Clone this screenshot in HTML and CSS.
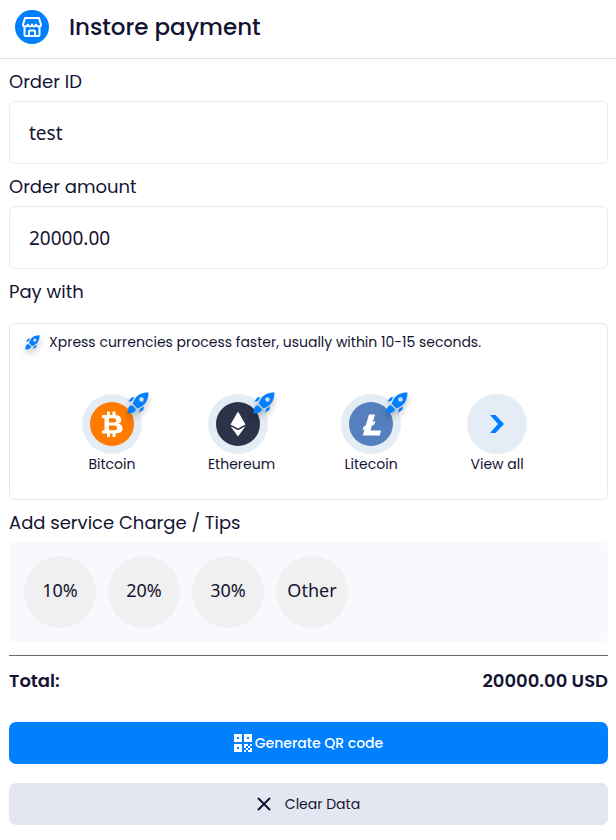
FILE: index.html
```html
<!DOCTYPE html>
<html lang="en">
<head>
<meta charset="utf-8">
<meta name="viewport" content="width=device-width, initial-scale=1">
<title>Instore payment</title>
<link rel="stylesheet" href="styles.css">
</head>
<body>
<svg class="defs" aria-hidden="true">
  <symbol id="rocket" viewBox="0 0 22 22">
    <path fill-rule="evenodd" d="M21.5.5C16 .6 11.500 2 8.600 5.800 7.200 7.800 6.200 10 5.800 11.700L10.300 16.200C12.500 15.700 14.600 14.700 16.300 13.200 20 10 21.300 6 21.500.5ZM14.500 5.200a2.300 2.300 0 1 1 0 4.600 2.300 2.300 0 0 1 0-4.600Z"/>
    <path d="M7.400 5.100 4.500 5.400 1.300 9.600 5 9.300ZM16.900 14.600 16.600 17.500 12.400 20.700 12.700 17ZM5 13.200C2 13.300.8 16 .5 21.500 6 21.200 8.700 20 8.800 17Z"/>
  </symbol>
</svg>
<header class="header">
  <svg class="logo" viewBox="0 0 34 34" aria-hidden="true">
    <circle cx="17" cy="17" r="17" fill="#007fff"/>
    <g fill="none" stroke="#fff" stroke-width="2" stroke-linejoin="round" stroke-linecap="round">
      <path d="M10 8H24L26 14.500Q26 16.500 23.500 16.500 21.500 16.500 21 14.500 20 16.500 19 16.500 17.500 16.500 17 14.500 16.500 16.500 15 16.500 13.500 16.500 13 14.500 12 16.500 10.500 16.500 8 16.500 8 14.500Z"/>
      <path d="M9.500 17V24.500Q9.500 26 11 26H23Q24.500 26 24.500 24.500V17M14 26V21.500Q14 20.500 15 20.500H19Q20 20.500 20 21.500V26"/>
    </g>
  </svg>
  <h1 class="title">Instore payment</h1>
</header>
<main class="page">
  <label class="label" for="order-id">Order ID</label>
  <input class="field" id="order-id" type="text" value="test">
  <label class="label" for="order-amount">Order amount</label>
  <input class="field" id="order-amount" type="text" value="20000.00">

  <h2 class="label label-pay">Pay with</h2>
  <section class="panel">
    <p class="notice"><svg class="rocket-small" aria-hidden="true"><use href="#rocket"/></svg>Xpress currencies process faster, usually within 10-15 seconds.</p>
    <div class="coins">
      <button class="coin" type="button">
        <span class="disc">
          <svg class="mark" viewBox="0 0 44 44" aria-hidden="true"><circle cx="22" cy="22" r="22" fill="#ff7b00"/><path fill="#fff" fill-rule="evenodd" d="M12 13H17V9.500H20V13H22.500V9.500H25.500V13.100C29.500 13.500 31.300 15.200 31.300 17.800 31.300 20 30 21.300 28.200 21.800 31 22.300 32.500 24 32.500 26.500 32.500 29.800 30.200 31.300 25.500 31.500V35H22.500V31.500H20V35H17V31.500H12V28.500H14.500V16H12ZM19 16.200V20.600H22.500C25 20.600 26.300 20 26.300 18.400 26.300 16.800 25 16.200 22.500 16.200ZM19 23.600V28.300H23C25.800 28.300 27.200 27.700 27.200 26 27.200 24.200 25.800 23.600 23 23.600Z"/></svg>
          <svg class="rocket" aria-hidden="true"><use href="#rocket"/></svg>
        </span>
        <span>Bitcoin</span>
      </button>
      <button class="coin" type="button">
        <span class="disc">
          <svg class="mark" viewBox="0 0 44 44" aria-hidden="true"><circle cx="22" cy="22" r="22" fill="#2c3247"/><path fill="#fff" d="M22 9.500 29.500 22.500 22 26.500 14.500 22.500ZM14.500 24.300 22 28.300 29.500 24.300 22 34.500Z"/></svg>
          <svg class="rocket" aria-hidden="true"><use href="#rocket"/></svg>
        </span>
        <span>Ethereum</span>
      </button>
      <button class="coin" type="button">
        <span class="disc">
          <svg class="mark" viewBox="0 0 44 44" aria-hidden="true"><circle cx="22" cy="22" r="22" fill="#567fbe"/><path fill="#fff" d="M20 12.500H26L23.800 20.300 26.500 18.800 25.500 22.300 22.700 23.900 21.500 28.500H32L30.800 33.500H13.800L15.600 27.200 13.500 28.300 14.500 24.700 16.700 23.500Z"/></svg>
          <svg class="rocket" aria-hidden="true"><use href="#rocket"/></svg>
        </span>
        <span>Litecoin</span>
      </button>
      <button class="coin" type="button">
        <span class="disc">
          <svg class="chevron" viewBox="0 0 14 18" aria-hidden="true"><path fill="#007fff" d="M0 0H5.500L14 9 5.500 18H0L8 9Z"/></svg>
        </span>
        <span>View all</span>
      </button>
    </div>
  </section>

  <h2 class="label">Add service Charge / Tips</h2>
  <div class="tips">
    <button class="tip" type="button">10%</button>
    <button class="tip" type="button">20%</button>
    <button class="tip" type="button">30%</button>
    <button class="tip" type="button">Other</button>
  </div>

  <div class="total"><span>Total:</span><span>20000.00 USD</span></div>

  <button class="action primary" type="button">
    <svg class="qr" viewBox="0 0 18 18" aria-hidden="true"><path fill="#fff" fill-rule="evenodd" d="M0 0H8V8H0ZM3 3V5H5V3ZM10 0H18V8H10ZM13 3V5H15V3ZM0 10H8V18H0ZM3 13V15H5V13ZM10 10H14V12H12V14H10ZM16 10H18V12H16ZM14 12H16V14H14ZM12 14H14V16H12ZM10 16H12V18H10ZM16 14H18V18H14V16H16Z"/></svg>
    <span>Generate QR code</span>
  </button>
  <button class="action secondary" type="button">
    <svg class="cross" viewBox="0 0 14 14" aria-hidden="true"><path d="M1.500 1.500 12.500 12.500M12.500 1.500 1.500 12.500" stroke="#141432" stroke-width="2" stroke-linecap="round"/></svg>
    <span>Clear Data</span>
  </button>
</main>
</body>
</html>
```
FILE: styles.css
```css
* {
  box-sizing: border-box;
}

body {
  margin: 0;
  background: #fff;
  color: #141432;
  font-family: Poppins, Inter, sans-serif;
  font-size: 14px;
}

button,
input {
  font: inherit;
  color: inherit;
}

button {
  border: 0;
  padding: 0;
  cursor: pointer;
}

.defs {
  position: absolute;
  width: 0;
  height: 0;
}

.header {
  display: flex;
  align-items: center;
  gap: 20px;
  padding: 10px 15px 14px;
  border-bottom: 1px solid #e1e1e4;
}

.logo {
  width: 34px;
  height: 34px;
}

.title {
  margin: 0;
  font-size: 23px;
  line-height: 34px;
  font-weight: 500;
}

.page {
  display: flex;
  flex-direction: column;
  padding: 0 8px 15px 9px;
}

.label {
  margin: 0;
  padding: 10px 0 7px;
  font-size: 18px;
  line-height: 25px;
  font-weight: 400;
}

.label-pay {
  padding-bottom: 19px;
}

.field {
  width: 100%;
  height: 63px;
  padding: 0 19px;
  border: 1px solid #ebebef;
  border-radius: 6px;
  background: #fff;
  font-family: "Noto Sans", sans-serif;
  font-size: 19px;
}

.panel {
  padding: 8px 15px 25px;
  border: 1px solid #e6e6ea;
  border-radius: 6px;
}

.notice {
  display: flex;
  align-items: center;
  gap: 9px;
  margin: 0;
  line-height: 20px;
}

.rocket-small,
.rocket {
  fill: #007fff;
  filter: drop-shadow(0 4px 3px #0004);
}

.rocket-small {
  flex: none;
  width: 15px;
  height: 15px;
}

.coins {
  display: flex;
  justify-content: center;
  gap: 66px;
  padding: 42px 8px 0 0;
}

.coin {
  display: flex;
  flex-direction: column;
  min-width: 60px;
  background: none;
  line-height: 20px;
}

.disc {
  position: relative;
  display: grid;
  place-items: center;
  width: 60px;
  height: 60px;
  border-radius: 50%;
  background: #e4edf5;
}

.coin > span:last-child {
  align-self: center;
}

.mark {
  width: 44px;
  height: 44px;
}

.rocket {
  position: absolute;
  top: -2px;
  right: -7px;
  width: 22px;
  height: 22px;
}

.chevron {
  width: 14px;
  height: 18px;
}

.tips {
  display: flex;
  flex-wrap: wrap;
  gap: 12px;
  padding: 14px 15px;
  border-radius: 6px;
  background: #f8f9ff;
}

.tip {
  width: 72px;
  height: 72px;
  padding-bottom: 4px;
  border-radius: 50%;
  background: #f0f0f0;
  font-family: "Noto Sans", sans-serif;
  font-size: 18px;
}

.total {
  display: flex;
  justify-content: space-between;
  margin-top: 13px;
  padding: 12px 0 29px;
  border-top: 1px solid #6b6b6b;
  font-size: 18px;
  line-height: 25px;
  font-weight: 600;
}

.action {
  display: flex;
  align-items: center;
  justify-content: center;
  height: 42px;
  border-radius: 7px;
}

.primary {
  gap: 3px;
  background: #007fff;
  color: #fff;
  font-weight: 500;
}

.secondary {
  gap: 14px;
  margin-top: 19px;
  background: #e4e7f1;
}

.qr {
  width: 18px;
  height: 18px;
}

.cross {
  width: 14px;
  height: 14px;
}
```
